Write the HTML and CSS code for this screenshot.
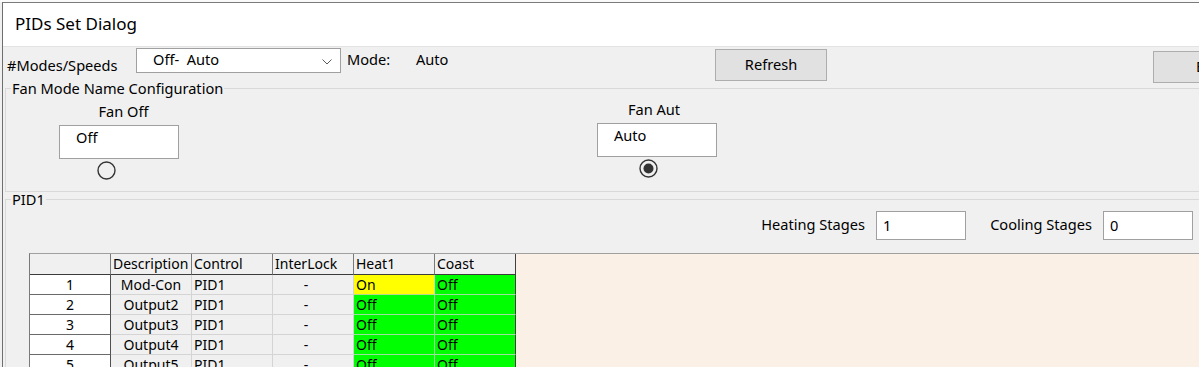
FILE: index.html
```html
<!DOCTYPE html>
<html lang="en">
<head>
  <meta charset="UTF-8" />
  <title>PIDs Set Dialog</title>
  <link rel="stylesheet" href="styles.css">
</head>
<body>
<div class="backdrop"></div>

<div class="window">
  <div class="titlebar">PIDs Set Dialog</div>

  <div class="toolbar">
    <span class="modes-label">#Modes/Speeds</span>
    <div class="combo">
      <span class="combo-text">Off-  Auto</span>
      <svg class="chevron" width="10" height="6" viewBox="0 0 10 6"><polyline points="0.5,0.5 5,5 9.5,0.5" fill="none" stroke="#5a5a5a" stroke-width="1"/></svg>
    </div>
    <span class="mode-label">Mode:</span>
    <span class="mode-value">Auto</span>
    <button class="btn refresh">Refresh</button>
    <button class="btn exit">Exit</button>
  </div>

  <fieldset class="group fan-group">
    <legend>Fan Mode Name Configuration</legend>
    <div class="fan-modes">
      <div class="fan-mode fan-off">
        <div class="fan-label">Fan Off</div>
        <div class="textbox">Off</div>
        <svg class="radio" width="19" height="19" viewBox="0 0 19 19"><circle cx="9.5" cy="9.5" r="8.5" fill="none" stroke="#333" stroke-width="1.4"/></svg>
      </div>
      <div class="fan-mode fan-auto">
        <div class="fan-label">Fan Aut</div>
        <div class="textbox">Auto</div>
        <svg class="radio" width="19" height="19" viewBox="0 0 19 19"><circle cx="9.5" cy="9.5" r="8.5" fill="none" stroke="#333" stroke-width="1.4"/><circle cx="9.5" cy="9.5" r="5" fill="#333"/></svg>
      </div>
    </div>
  </fieldset>

  <fieldset class="group pid-group">
    <legend>PID1</legend>
    <div class="stages">
      <span class="stage-label">Heating Stages</span>
      <div class="stage-input">1</div>
      <span class="stage-label">Cooling Stages</span>
      <div class="stage-input">0</div>
    </div>

    <div class="grid">
      <table class="cells">
        <thead>
          <tr><th class="corner"></th><th>Description</th><th>Control</th><th>InterLock</th><th>Heat1</th><th class="last">Coast</th></tr>
        </thead>
        <tbody>
          <tr><th class="rowhead">1</th><td class="center">Mod-Con</td><td>PID1</td><td class="center dash">-</td><td class="on">On</td><td class="off last">Off</td></tr>
          <tr><th class="rowhead">2</th><td class="center">Output2</td><td>PID1</td><td class="center dash">-</td><td class="off">Off</td><td class="off last">Off</td></tr>
          <tr><th class="rowhead">3</th><td class="center">Output3</td><td>PID1</td><td class="center dash">-</td><td class="off">Off</td><td class="off last">Off</td></tr>
          <tr><th class="rowhead">4</th><td class="center">Output4</td><td>PID1</td><td class="center dash">-</td><td class="off">Off</td><td class="off last">Off</td></tr>
          <tr><th class="rowhead">5</th><td class="center">Output5</td><td>PID1</td><td class="center dash">-</td><td class="off">Off</td><td class="off last">Off</td></tr>
        </tbody>
      </table>
      <div class="filler"></div>
    </div>
  </fieldset>
</div>
</body>
</html>
```

FILE: styles.css
```css
html, body { margin: 0; overflow: hidden; }
body { width: 1199px; height: 367px; background: #f0f0f0; color: #000; font-family: "Noto Sans", "Open Sans", sans-serif; font-size: 14.6px; line-height: 18px; }

.backdrop { height: 2px; background: #fafafa; }
.window { width: 1280px; margin-left: 2px; border-top: 1px solid #7a7a7a; border-left: 1px solid #6e6e6e; background: #f0f0f0; }
.titlebar { height: 44px; box-sizing: border-box; background: #fff; border-bottom: 1px solid #e3e3e3; padding: 9px 0 0 12px; font-size: 17px; line-height: 24px; }

/* top row of controls */
.toolbar { display: flex; align-items: flex-start; height: 34px; padding-left: 4px; }
.modes-label { width: 129px; margin-top: 9px; white-space: nowrap; }
.combo { display: flex; align-items: flex-start; width: 205px; height: 25px; box-sizing: border-box; margin-top: 1px; padding: 1px 8px 0 16px; background: #fff; border: 1px solid #a0a0a0; }
.combo-text { white-space: pre; }
.chevron { margin: 9px 0 0 auto; }
.mode-label { width: 69px; margin: 3px 0 0 6px; }
.mode-value { width: 299px; margin-top: 3px; }
.btn { width: 112px; height: 32px; flex: none; padding: 0 0 2px; margin-top: 2px; background: #e1e1e1; border: 1px solid #adadad; font: inherit; color: #000; }
.btn.exit { margin: 4px 0 0 326px; text-align: left; padding-left: 42px; }

/* group boxes */
.group { margin: 0 0 0 2px; padding: 0; border: 1px solid #d9d9d9; min-width: 0; }
.group legend { margin-left: 5px; padding: 0 1px; line-height: 15px; }

.fan-modes { display: flex; align-items: flex-start; gap: 418px; padding: 6px 0 11px 53px; }
.fan-mode { display: flex; flex-direction: column; width: 120px; }
.fan-auto { margin-top: -2px; }
.fan-label { text-align: center; margin-bottom: 5px; }
.fan-off .fan-label { padding-left: 9px; }
.fan-auto .fan-label { padding-right: 6px; }
.textbox { height: 34px; box-sizing: border-box; padding: 2px 0 0 16px; background: #fff; border: 1px solid #a0a0a0; }
.radio { margin-top: 2px; }
.fan-off .radio { margin-left: 38px; }
.fan-auto .radio { margin-left: 42px; }

.stages { display: flex; align-items: flex-start; margin: 4px 0 0 734px; height: 29px; }
.stage-label { width: 136px; box-sizing: border-box; margin-top: 4px; padding-right: 11px; text-align: right; white-space: nowrap; }
.stage-input { width: 90px; height: 29px; box-sizing: border-box; padding: 4px 0 0 6px; background: #fff; border: 1px solid #a0a0a0; }
.stage-label + .stage-input + .stage-label { width: 137px; }

/* data grid */
.grid { display: flex; align-items: flex-start; height: 130px; margin: 13px 0 0 23px; border-top: 1px solid #a0a0a0; border-left: 1px solid #7a7a7a; }
.filler { flex: 1; align-self: stretch; background: #faf0e6; }
.cells { border-spacing: 0; table-layout: fixed; width: 486px; font-size: 14px; }
.cells th, .cells td { width: 81px; box-sizing: border-box; padding: 0 0 0 2px; line-height: 19px; font-weight: normal; text-align: left; white-space: nowrap; overflow: hidden; border-right: 1px solid #d4d4d4; border-bottom: 1px solid #d4d4d4; }
.cells thead th { line-height: 20px; background: #f0f0f0; border-right-color: #7a7a7a; border-bottom-color: #3c3c3c; }
.cells .rowhead { text-align: center; background: #fff; padding: 0; border-right-color: #505050; border-bottom-color: #6a6a6a; }
.cells .center { text-align: center; padding: 0; }
.cells .dash { padding-right: 14px; }
.cells .on { background: #ffff00; border-bottom-color: #b8d890; }
.cells .off { background: #00ff00; border-bottom-color: #9fdf9f; border-right-color: #9fdf9f; }
.cells .last { border-right-color: #404040; }
```
